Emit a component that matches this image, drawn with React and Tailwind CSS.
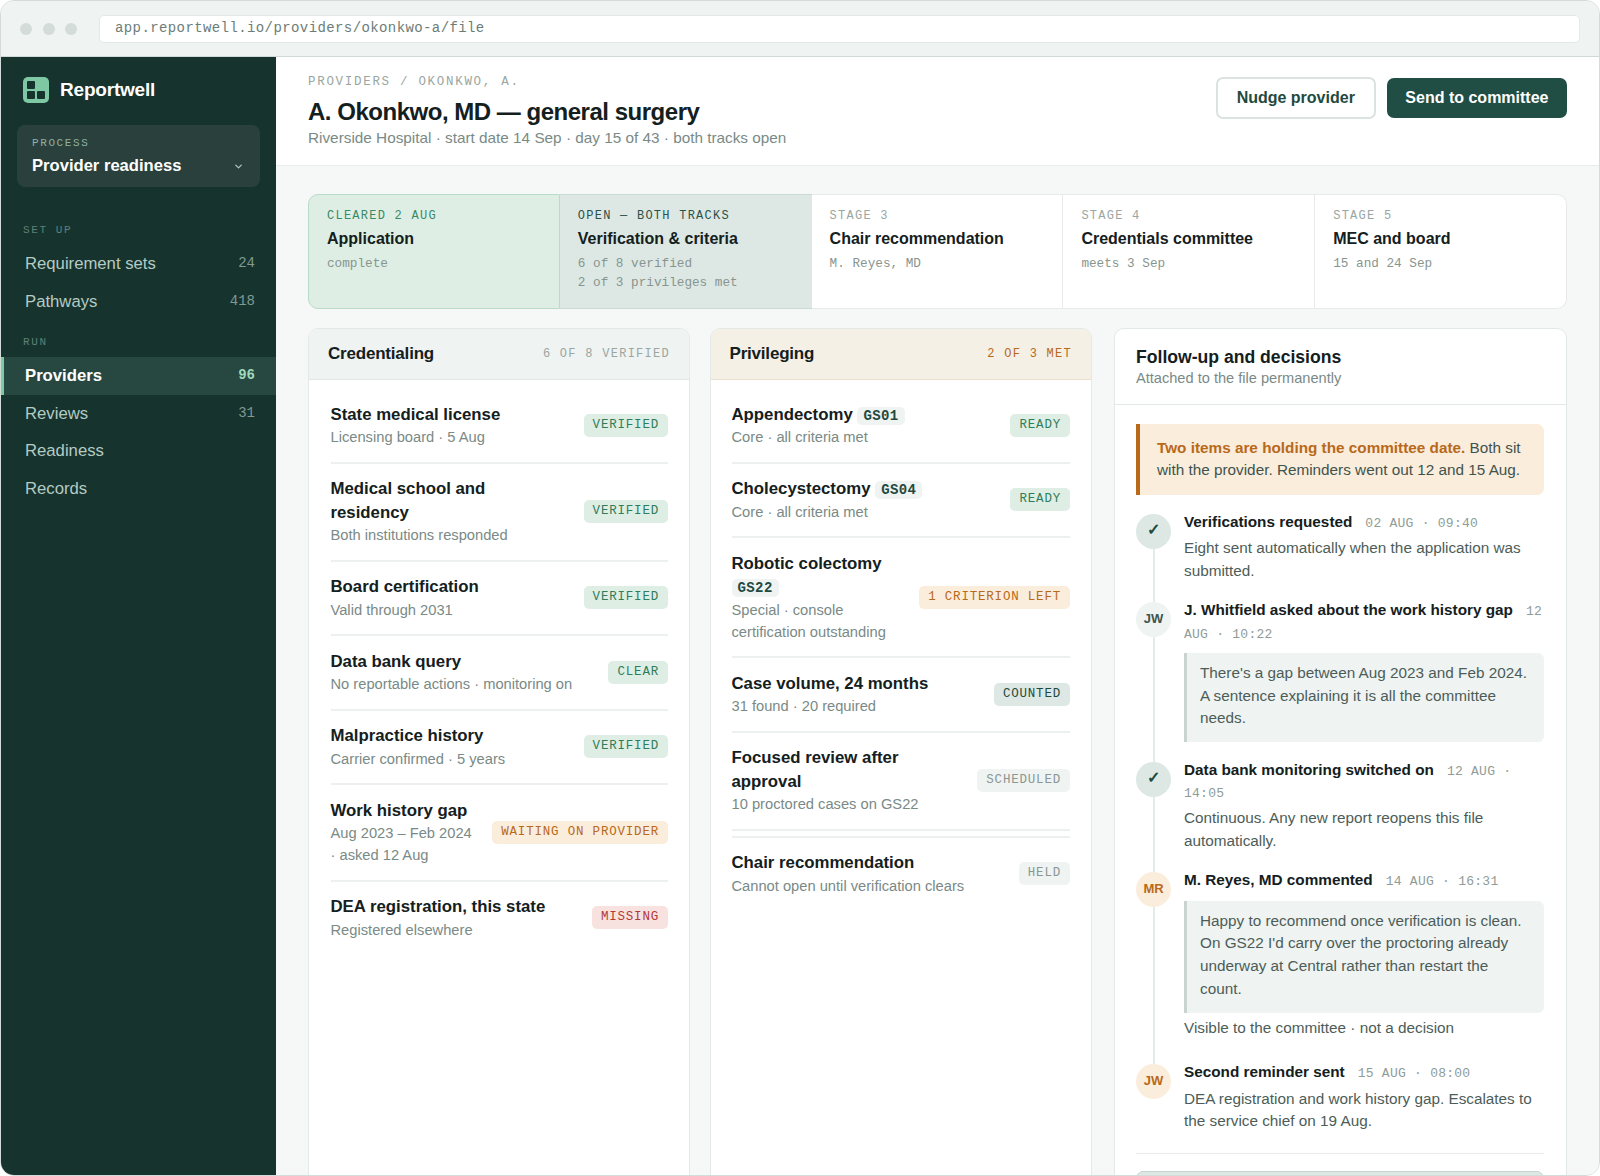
import React from 'react';
import { ChevronDown } from 'lucide-react';

const mono = "font-['Liberation_Mono',monospace]";

const badgeTone = {
  green: 'bg-[#deeee5] text-[#2f7d5b]',
  amber: 'bg-[#fbeddc] text-[#b8691a]',
  red: 'bg-[#f8e2e0] text-[#b23a36]',
  gray: 'bg-[#eff3f2] text-[#8a9793]',
  teal: 'bg-[#dde8e4] text-[#1f4a40]',
};

const Badge = ({ tone, children }) => (
  <span className={`${mono} ${badgeTone[tone]} shrink-0 rounded-[5px] px-[9px] h-[23px] flex items-center text-[12.5px] tracking-[0.8px] whitespace-nowrap`}>
    {children}
  </span>
);

const Code = ({ children }) => (
  <span className={`${mono} my-[1px] inline-block rounded-[5px] bg-[#eff3f2] px-[6px] text-[14px] leading-[18px] font-bold tracking-[0.4px] text-[#1f4a40]`}>
    {children}
  </span>
);

const NavItem = ({ label, count, active }) => (
  <div className={`flex h-[37.4px] items-center justify-between pl-[21px] pr-[21px] border-l-[3px] ${active ? 'bg-[#264840] border-[#7fc8a4] text-white font-bold' : 'border-transparent text-[#b4cbc3]'}`}>
    <span className="text-[16.7px]">{label}</span>
    {count && (
      <span className={`${mono} text-[14px] ${active ? 'text-[#9fd8bb]' : 'text-[#7e9a91]'}`}>{count}</span>
    )}
  </div>
);

const Stage = ({ label, title, details, cls, labelCls }) => (
  <div className={`pl-[18px] pr-[12px] pt-[14.5px] ${cls}`}>
    <div className={`${mono} text-[12px] leading-[15px] tracking-[1.25px] whitespace-nowrap ${labelCls}`}>{label}</div>
    <div className="mt-[3px] text-[16px] font-bold leading-[24px] text-[#14201d]">{title}</div>
    <div className={`${mono} mt-[4px] text-[12.7px] leading-[18.7px] text-[#87958f]`}>
      {details.map((d) => (
        <div key={d}>{d}</div>
      ))}
    </div>
  </div>
);

const Row = ({ title, code, sub, badge, tone, last, double }) => (
  <div className={`flex items-center justify-between gap-[16px] py-[13.5px] ${last ? '' : 'border-b-2 border-[#ecf0ee]'} ${double ? 'mb-[5px]' : ''}`}>
    <div className="min-w-0">
      <div className="text-[16.8px] font-bold leading-[23.5px] text-[#14201d]">
        {title}
        {code && <> <Code>{code}</Code></>}
      </div>
      <div className="text-[14.7px] leading-[22px] text-[#7a8a86]">{sub}</div>
    </div>
    <Badge tone={tone}>{badge}</Badge>
  </div>
);

const Avatar = ({ kind, children }) => {
  const styles = {
    check: 'bg-[#dde8e4] text-[#1f4a40] text-[16px]',
    gray: 'bg-[#eff3f2] text-[#3f534d] text-[13px]',
    amber: 'bg-[#fbeddc] text-[#b8691a] text-[13px]',
  };
  return (
    <div className={`flex h-[35px] w-[35px] shrink-0 items-center justify-center rounded-full pb-[2px] font-bold ${styles[kind]}`}>
      {children}
    </div>
  );
};

const Event = ({ kind, mark, title, time, children, last, extra }) => (
  <div className="flex gap-[13px]">
    <div className="flex w-[35px] shrink-0 flex-col items-center">
      <Avatar kind={kind}>{mark}</Avatar>
      {!last && <div className="w-[2px] flex-1 bg-[#e5ebe9]" />}
    </div>
    <div className={`-mt-[3px] min-w-0 flex-1 ${extra ? 'pb-[25px]' : 'pb-[19.5px]'}`}>
      <div className="text-[15.3px] leading-[22.4px]">
        <span className="font-bold text-[#14201d]">{title}</span>
        <span className={`${mono} ml-[13px] text-[13px] leading-none tracking-[0.25px] text-[#8f9c97]`}>{time}</span>
      </div>
      {children}
    </div>
  </div>
);

const Note = ({ children }) => (
  <p className="mt-[4px] text-[15.3px] leading-[22.7px] text-[#4c5d58]">{children}</p>
);

const Quote = ({ children }) => (
  <div className="mt-[9px] rounded-r-[6px] border-l-[3px] border-[#c9d4d0] bg-[#eff3f2] pl-[13px] pr-[14px] pt-[9px] pb-[12px] text-[15.3px] leading-[22.7px] text-[#4c5d58]">
    {children}
  </div>
);

export default function App() {
  return (
    <div className="h-[1176px] overflow-hidden bg-white font-['Liberation_Sans',sans-serif]">
      <div className="flex h-full flex-col overflow-hidden rounded-[14px] border-[1.5px] border-[#d3dcd9]">
        {/* browser chrome */}
        <div className="flex h-[56px] shrink-0 items-center gap-[22px] border-b-[1.5px] border-[#cfd9d6] bg-[#eff3f2] pl-[19px] pr-[19px]">
          <div className="flex gap-[10.5px]">
            <span className="h-[12px] w-[12px] rounded-full bg-[#d3dcd9]" />
            <span className="h-[12px] w-[12px] rounded-full bg-[#d3dcd9]" />
            <span className="h-[12px] w-[12px] rounded-full bg-[#d3dcd9]" />
          </div>
          <div className={`${mono} flex h-[28px] flex-1 items-center rounded-[5px] border border-[#e3e9e7] bg-white px-[15px] text-[14px] tracking-[0.4px] text-[#6c7d78]`}>
            app.reportwell.io/providers/okonkwo-a/file
          </div>
        </div>

        <div className="flex min-h-0 flex-1">
          {/* sidebar */}
          <aside className="w-[275px] shrink-0 bg-[#17332e]">
            <div className="flex items-center gap-[11px] pl-[22px] pt-[20px]">
              <div className="grid h-[26px] w-[26px] grid-cols-2 gap-[2px] rounded-[5px] bg-[#7fc8a4] p-[4px]">
                <span className="rounded-[1px] bg-[#17332e]" />
                <span />
                <span className="rounded-[1px] bg-[#17332e]" />
                <span className="rounded-[1px] bg-[#17332e]" />
              </div>
              <span className="text-[19px] font-bold leading-[24px] tracking-[-0.2px] text-white">Reportwell</span>
            </div>
            <div className="mx-[16px] mt-[22px] rounded-[8px] bg-[#2a403c] px-[15px] pt-[10.5px] pb-[9.7px]">
              <div className={`${mono} text-[11px] leading-[14px] tracking-[1.6px] text-[#8fb0a5]`}>PROCESS</div>
              <div className="mt-[4.3px] flex items-center justify-between">
                <span className="text-[16.6px] font-bold leading-[24px] text-white">Provider readiness</span>
                <ChevronDown size={11} strokeWidth={3} className="mr-[1px] mt-[2px] text-[#a9c4bb]" />
              </div>
            </div>
            <div className={`${mono} mt-[35.5px] pl-[22px] text-[11px] leading-[14px] tracking-[1.6px] text-[#5f8076]`}>SET UP</div>
            <div className="mt-[8px]">
              <NavItem label="Requirement sets" count="24" />
              <NavItem label="Pathways" count="418" />
            </div>
            <div className={`${mono} mt-[15px] pl-[22px] text-[11px] leading-[14px] tracking-[1.6px] text-[#5f8076]`}>RUN</div>
            <div className="mt-[8.5px]">
              <NavItem label="Providers" count="96" active />
              <NavItem label="Reviews" count="31" />
              <NavItem label="Readiness" />
              <NavItem label="Records" />
            </div>
          </aside>

          {/* main */}
          <main className="min-w-0 flex-1 bg-[#f6f8f7]">
            <header className="flex h-[109px] justify-between border-b-[1.5px] border-[#e8edeb] bg-white pl-[32px] pr-[32px]">
              <div className="pt-[17px]">
                <div className={`${mono} text-[12.5px] leading-[16px] tracking-[1.7px] text-[#9aa6a2]`}>PROVIDERS / OKONKWO, A.</div>
                <h1 className="mt-[6px] text-[24px] font-bold leading-[31px] tracking-[-0.48px] text-[#14201d]">A. Okonkwo, MD — general surgery</h1>
                <div className="text-[15.32px] leading-[21.5px] text-[#7a8a86]">Riverside Hospital · start date 14 Sep · day 15 of 43 · both tracks open</div>
              </div>
              <div className="flex items-start gap-[11px] pt-[19.5px]">
                <button className="h-[42px] rounded-[7px] border-2 border-[#dbe3e0] bg-white px-[19px] text-[16px] font-bold text-[#1f4a40]">Nudge provider</button>
                <button className="mt-[1px] h-[40px] rounded-[7px] bg-[#214e44] px-[18.5px] text-[16px] font-bold text-white">Send to committee</button>
              </div>
            </header>

            <div className="pl-[32px] pr-[32px] pt-[27.5px]">
              {/* stage strip */}
              <div className="grid h-[115.5px] grid-cols-5">
                <Stage label="CLEARED 2 AUG" title="Application" details={['complete']} cls="rounded-l-[10px] border-[1.5px] border-[#b9dcc8] bg-[#deeee4]" labelCls="text-[#3a8a67]" />
                <Stage label="OPEN — BOTH TRACKS" title="Verification & criteria" details={['6 of 8 verified', '2 of 3 privileges met']} cls="border-y-[1.5px] border-[#c9dbd4] bg-[#dde8e4]" labelCls="text-[#2c5248]" />
                <Stage label="STAGE 3" title="Chair recommendation" details={['M. Reyes, MD']} cls="border-y-[1.5px] border-r-[1.5px] border-[#e6ebe9] bg-white" labelCls="text-[#9aa6a2]" />
                <Stage label="STAGE 4" title="Credentials committee" details={['meets 3 Sep']} cls="border-y-[1.5px] border-r-[1.5px] border-[#e6ebe9] bg-white" labelCls="text-[#9aa6a2]" />
                <Stage label="STAGE 5" title="MEC and board" details={['15 and 24 Sep']} cls="rounded-r-[10px] border-y-[1.5px] border-r-[1.5px] border-[#e6ebe9] bg-white" labelCls="text-[#9aa6a2]" />
              </div>

              <div className="mt-[19px] grid h-[900px] grid-cols-[382px_382px_1fr] gap-x-[20px]">
                {/* credentialing */}
                <section className="rounded-[10px] border-[1.5px] border-[#e3e9e7] bg-white">
                  <div className="flex h-[51px] items-center justify-between rounded-t-[9px] border-b-[1.5px] border-[#dfe6e4] bg-[#eff3f2] pl-[19px] pr-[19px]">
                    <span className="text-[17px] font-bold tracking-[-0.2px] text-[#14201d]">Credentialing</span>
                    <span className={`${mono} text-[12px] tracking-[1.27px] text-[#9aa6a2]`}>6 OF 8 VERIFIED</span>
                  </div>
                  <div className="pl-[21.5px] pr-[21px] pt-[9px]">
                    <Row title="State medical license" sub="Licensing board · 5 Aug" badge="VERIFIED" tone="green" />
                    <Row title="Medical school and residency" sub="Both institutions responded" badge="VERIFIED" tone="green" />
                    <Row title="Board certification" sub="Valid through 2031" badge="VERIFIED" tone="green" />
                    <Row title="Data bank query" sub="No reportable actions · monitoring on" badge="CLEAR" tone="green" />
                    <Row title="Malpractice history" sub="Carrier confirmed · 5 years" badge="VERIFIED" tone="green" />
                    <Row title="Work history gap" sub="Aug 2023 – Feb 2024 · asked 12 Aug" badge="WAITING ON PROVIDER" tone="amber" />
                    <Row title="DEA registration, this state" sub="Registered elsewhere" badge="MISSING" tone="red" last />
                  </div>
                </section>

                {/* privileging */}
                <section className="rounded-[10px] border-[1.5px] border-[#e3e9e7] bg-white">
                  <div className="flex h-[51px] items-center justify-between rounded-t-[9px] border-b-[1.5px] border-[#ebe0cf] bg-[#f5f0e6] pl-[18.5px] pr-[19px]">
                    <span className="text-[17px] font-bold tracking-[-0.2px] text-[#14201d]">Privileging</span>
                    <span className={`${mono} text-[12px] tracking-[1.27px] text-[#b8691a]`}>2 OF 3 MET</span>
                  </div>
                  <div className="pl-[20.5px] pr-[21px] pt-[9px]">
                    <Row title="Appendectomy" code="GS01" sub="Core · all criteria met" badge="READY" tone="green" />
                    <Row title="Cholecystectomy" code="GS04" sub="Core · all criteria met" badge="READY" tone="green" />
                    <Row title="Robotic colectomy" code="GS22" sub="Special · console certification outstanding" badge="1 CRITERION LEFT" tone="amber" />
                    <Row title="Case volume, 24 months" sub="31 found · 20 required" badge="COUNTED" tone="teal" />
                    <Row title="Focused review after approval" sub="10 proctored cases on GS22" badge="SCHEDULED" tone="gray" double />
                    <div className="border-t-2 border-[#ecf0ee]">
                      <Row title="Chair recommendation" sub="Cannot open until verification clears" badge="HELD" tone="gray" last />
                    </div>
                  </div>
                </section>

                {/* follow-up */}
                <section className="ml-[2px] rounded-[10px] border-[1.5px] border-[#e3e9e7] bg-white">
                  <div className="h-[76px] border-b-[1.5px] border-[#e3e9e7] px-[21px] pt-[16px]">
                    <div className="text-[17.6px] font-bold leading-[24px] text-[#14201d]">Follow-up and decisions</div>
                    <div className="text-[14.6px] leading-[19px] text-[#7a8a86]">Attached to the file permanently</div>
                  </div>
                  <div className="pl-[21px] pr-[22px] pt-[18.5px]">
                    <div className="rounded-r-[7px] border-l-[4px] border-[#b8691a] bg-[#fbeddc] px-[17px] py-[13px] text-[15.3px] leading-[22.7px] text-[#3f534d]">
                      <b className="text-[#b8691a]">Two items are holding the committee date.</b> Both sit with the provider. Reminders went out 12 and 15 Aug.
                    </div>
                    <div className="mt-[19px]">
                      <Event kind="check" mark="✓" title="Verifications requested" time="02 AUG · 09:40">
                        <Note>Eight sent automatically when the application was submitted.</Note>
                      </Event>
                      <Event kind="gray" mark="JW" title="J. Whitfield asked about the work history gap" time="12 AUG · 10:22">
                        <Quote>There's a gap between Aug 2023 and Feb 2024. A sentence explaining it is all the committee needs.</Quote>
                      </Event>
                      <Event kind="check" mark="✓" title="Data bank monitoring switched on" time="12 AUG · 14:05">
                        <Note>Continuous. Any new report reopens this file automatically.</Note>
                      </Event>
                      <Event kind="amber" mark="MR" title="M. Reyes, MD commented" time="14 AUG · 16:31" extra>
                        <Quote>Happy to recommend once verification is clean. On GS22 I'd carry over the proctoring already underway at Central rather than restart the count.</Quote>
                        <Note>Visible to the committee · not a decision</Note>
                      </Event>
                      <Event kind="amber" mark="JW" title="Second reminder sent" time="15 AUG · 08:00" last>
                        <Note>DEA registration and work history gap. Escalates to the service chief on 19 Aug.</Note>
                      </Event>
                    </div>
                    <div className="border-t-[1.5px] border-[#e8edeb] pt-[17px]">
                      <div className="h-[40px] rounded-[7px] border-[1.5px] border-[#c9d4d0] bg-[#dde8e4]" />
                    </div>
                  </div>
                </section>
              </div>
            </div>
          </main>
        </div>
      </div>
    </div>
  );
}
